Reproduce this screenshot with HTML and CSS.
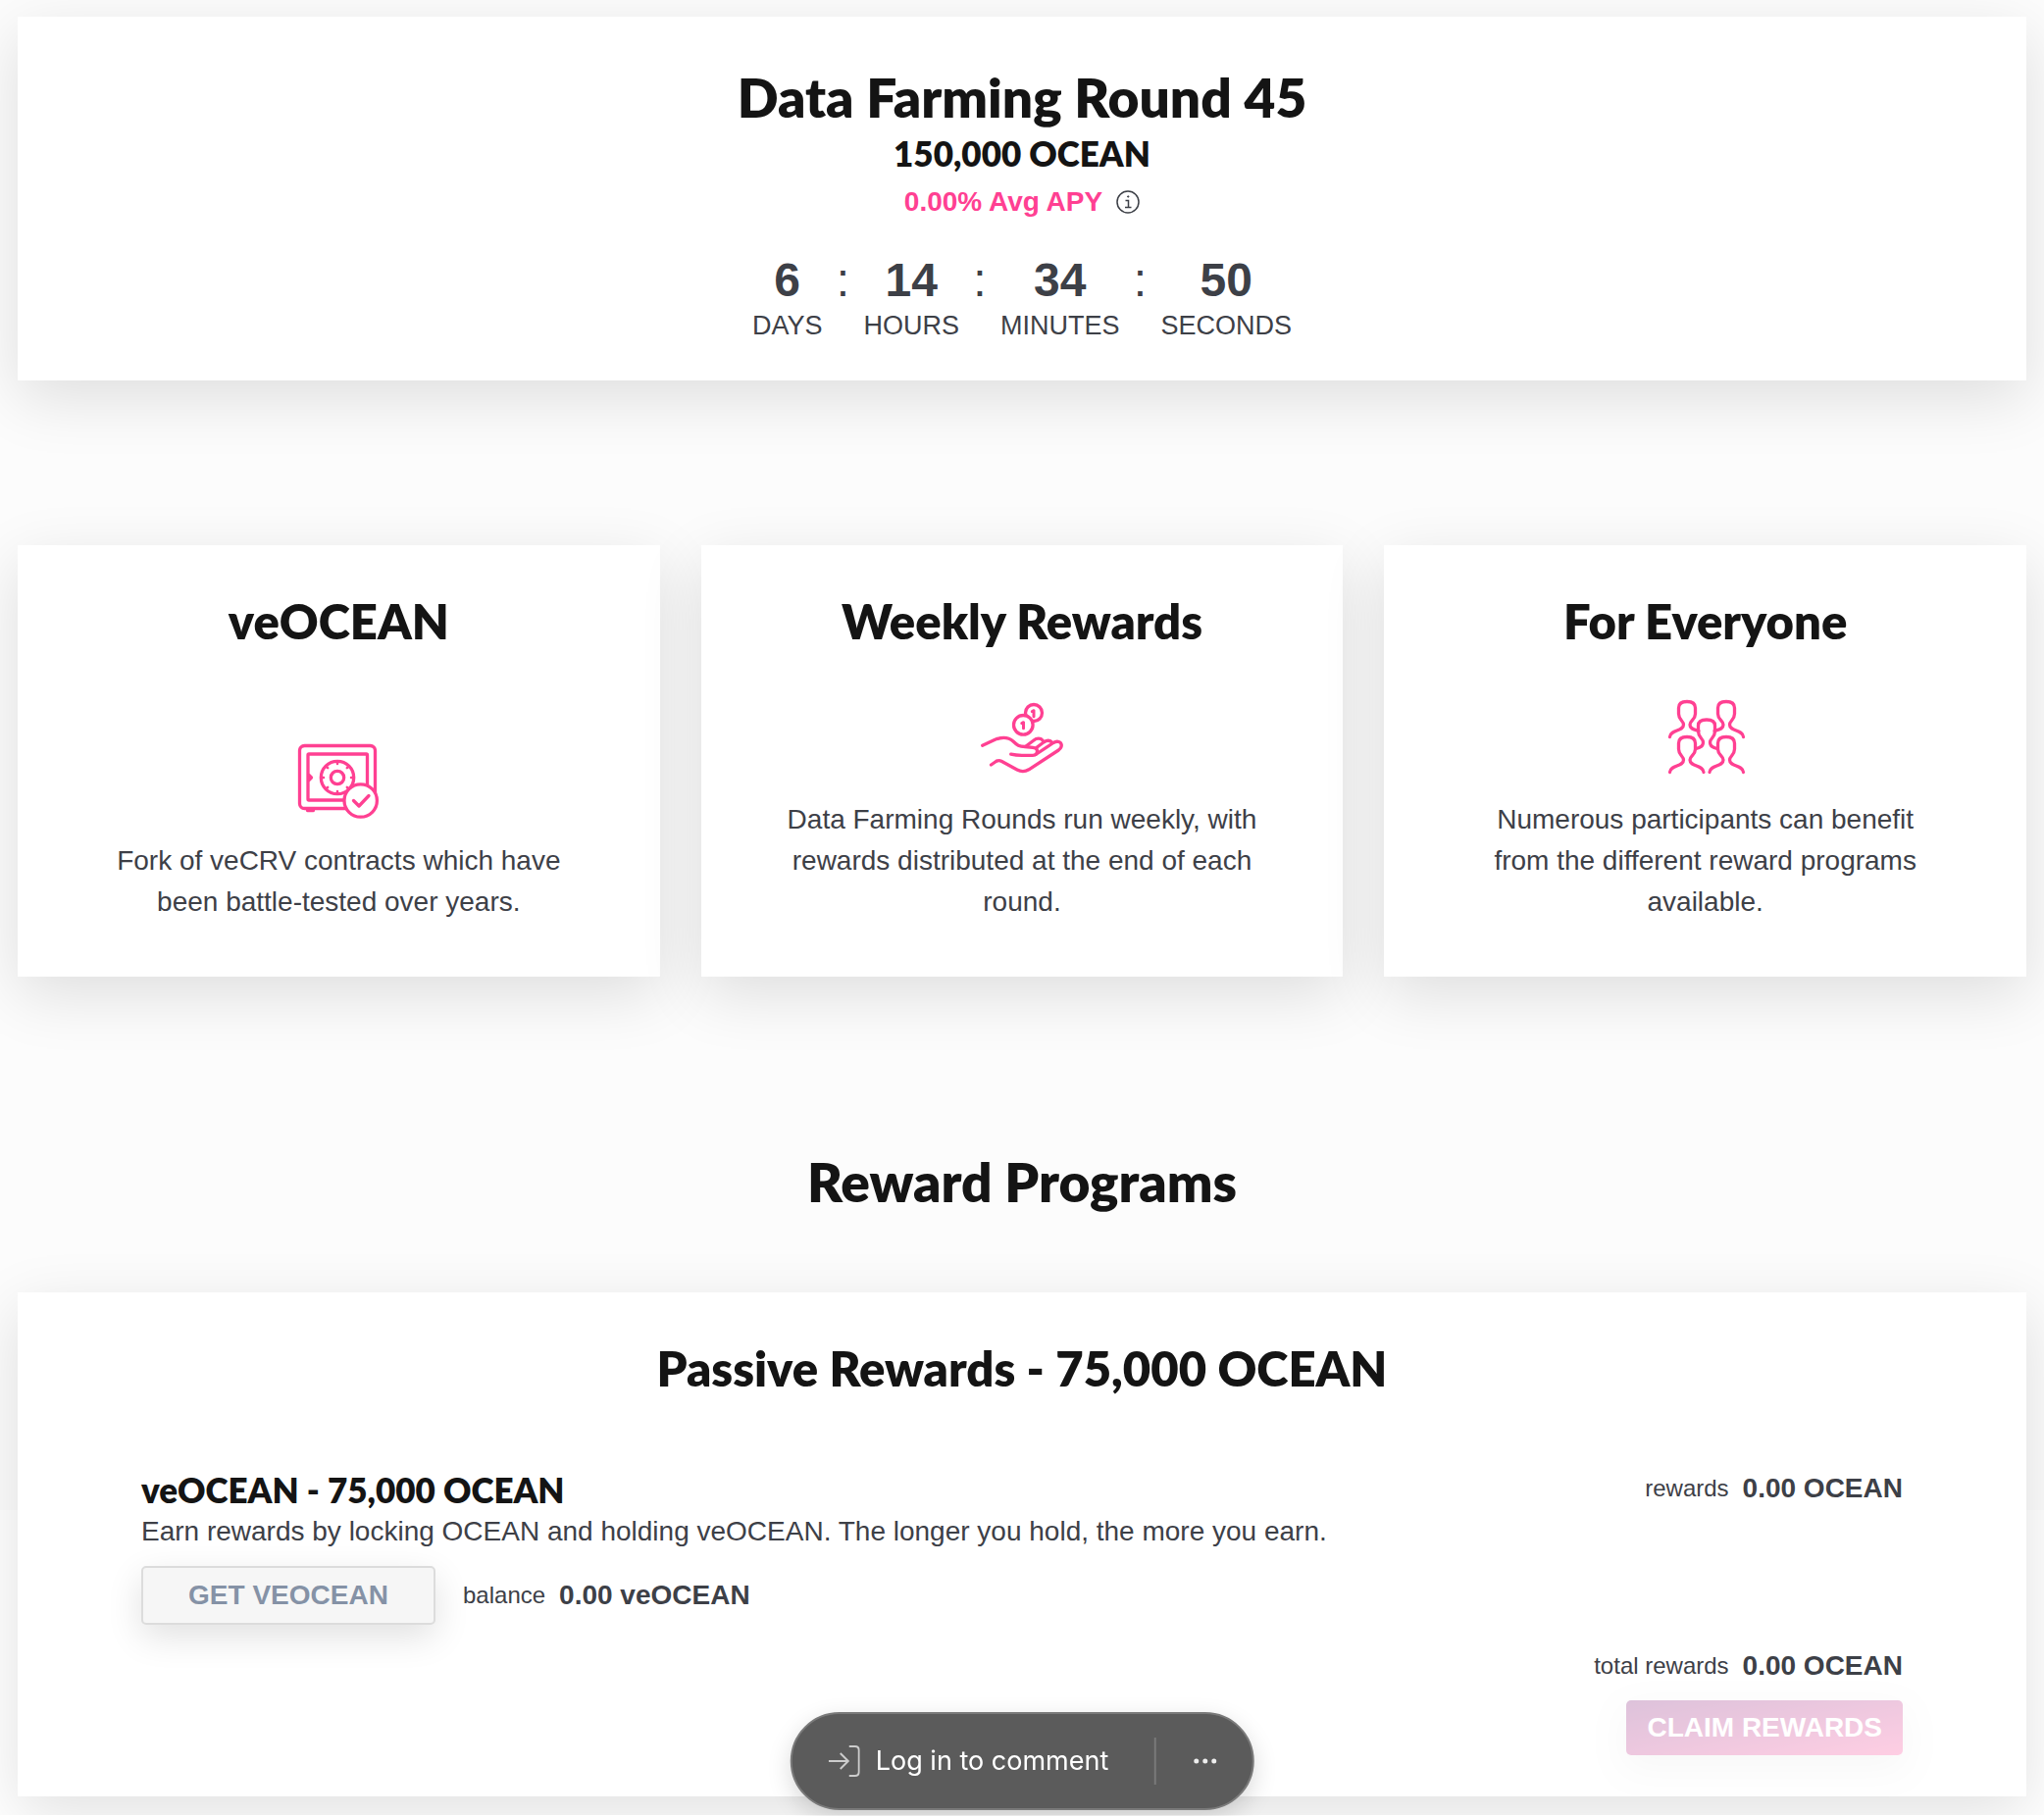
FILE: index.html
```html
<!DOCTYPE html>
<html lang="en">
<head>
<meta charset="utf-8">
<title>Data Farming</title>
<link rel="stylesheet" href="styles.css">
</head>
<body>
<main class="page">
  <section class="card hero">
    <h1 class="title">Data Farming Round 45</h1>
    <p class="subtitle">150,000 OCEAN</p>
    <div class="apy">
      <strong class="apy-value">0.00% Avg APY</strong>
      <svg class="info" viewBox="0 0 24 24" fill="none" stroke="currentColor" stroke-width="1.5" role="img" aria-label="Info"><circle cx="12" cy="12" r="11"/><path d="M9.500 10.500h3V17.500M9 17.500h6.500"/><circle cx="12.200" cy="6.500" r=".7" fill="currentColor" stroke-width="1"/></svg>
    </div>
    <div class="countdown">
      <div class="unit"><b class="num">6</b><span>DAYS</span></div>
      <span class="colon">:</span>
      <div class="unit"><b class="num">14</b><span>HOURS</span></div>
      <span class="colon">:</span>
      <div class="unit"><b class="num">34</b><span>MINUTES</span></div>
      <span class="colon">:</span>
      <div class="unit"><b class="num">50</b><span>SECONDS</span></div>
    </div>
  </section>

  <section class="features">
    <article class="card feature">
      <h2 class="heading">veOCEAN</h2>
      <div class="feature-body">
        <svg class="icon" viewBox="0 0 84 84" aria-hidden="true">
          <rect x="2.500" y="8.500" width="77" height="64" rx="5"/>
          <rect x="11" y="17" width="60.500" height="47" rx="1"/>
          <circle cx="41" cy="41" r="16.700"/>
          <path d="M41 26v1M41 55V56M26 41h1M55 41H56M30.500 30.500l.7.700M50.800 50.800l.7.700M30.500 51.500l.7-.7M50.800 31.200l.7-.7" stroke-width="2.500"/>
          <circle cx="41" cy="41" r="6.700"/>
          <path d="M12 38.500l2.500 2.500-2.500 2.500zM10.500 74.500h6"/>
          <circle class="fill" cx="64.700" cy="64.500" r="16.700"/>
          <path d="M57.500 64.500l5.500 5.500L73 59.500"/>
        </svg>
        <p>Fork of veCRV contracts which have been battle-tested over years.</p>
      </div>
    </article>
    <article class="card feature">
      <h2 class="heading">Weekly Rewards</h2>
      <div class="feature-body">
        <svg class="icon" viewBox="0 0 84 84" aria-hidden="true">
          <circle cx="54" cy="17" r="8.500"/>
          <path d="M52.300 15.500l1.700-.8v6" stroke-width="3"/>
          <circle class="fill" cx="43.300" cy="29.300" r="9.800"/>
          <path d="M41.800 27.500l1.700-.8v6" stroke-width="3"/>
          <path d="M1.700 50.300L14 44.500C21 41.500 28 41.500 33 46c4 4 6 5.200 12 5.500l8 .8c3 .3 4.500 1.500 4.500 3.500 0 3-2 4.500-4.500 4.500H42c-4 0-7-.2-11.300-1.200"/>
          <path d="M56 59.500L74 47.500c4-2.500 8-1 8.300 2.500 0 2-1 3.500-3 5L49 74.800c-4 2.300-8 2.300-12 .2L21 66.200c-2-1-3.500-1-5.500.3L10.500 70"/>
          <path d="M46 51l8-6c3-2.500 7-2.500 9 0M56 53l8-6c4-2.500 7-2 9 .5"/>
        </svg>
        <p>Data Farming Rounds run weekly, with rewards distributed at the end of each round.</p>
      </div>
    </article>
    <article class="card feature">
      <h2 class="heading">For Everyone</h2>
      <div class="feature-body">
        <svg class="icon" viewBox="0 0 84 84" aria-hidden="true">
          <path d="M5.500 41.500C6 34 19.500 36 19.500 29C19.500 25 14.500 24 14.500 18V12Q14.500 5.500 23 5.500T31.500 12V18C31.500 24 26 25 26 29C26 34 31 34 35 35.500"/>
          <path d="M80.500 41.500C80 34 66.500 36 66.500 29C66.500 25 71.500 24 71.500 18V12Q71.500 5.500 63 5.500T54.500 12V18C54.500 24 60 25 60 29C60 34 55 34 51 35.500"/>
          <path d="M32.500 53.500C37 52.500 39.500 51 39.500 47C39.500 43 34.500 42 34.500 36V30Q34.500 24 43 24T51.500 30V36C51.500 42 46.500 43 46.500 47C46.500 51 49 52.500 53.500 53.500"/>
          <path d="M5.500 77.500C6 70 19.500 72 19.500 65C19.500 61 14.500 60 14.500 54V48Q14.500 41.500 23 41.500T31.500 48V54C31.500 60 26 61 26 65C26 72 39.500 70 40 77.500"/>
          <path d="M46 77.500C46.500 70 60 72 60 65C60 61 54.500 60 54.500 54V48Q54.500 41.500 63 41.500T71.500 48V54C71.500 60 66.500 61 66.500 65C66.500 72 80 70 80.500 77.500"/>
        </svg>
        <p>Numerous participants can benefit from the different reward programs available.</p>
      </div>
    </article>
  </section>

  <h1 class="title programs">Reward Programs</h1>

  <section class="card passive">
    <h2 class="heading">Passive Rewards - 75,000 OCEAN</h2>
    <div class="program">
      <div>
        <h3 class="subtitle">veOCEAN - 75,000 OCEAN</h3>
        <p>Earn rewards by locking OCEAN and holding veOCEAN. The longer you hold, the more you earn.</p>
        <div class="actions">
          <button class="btn btn-plain" type="button">GET VEOCEAN</button>
          <span class="stat"><small>balance</small><b>0.00 veOCEAN</b></span>
        </div>
      </div>
      <span class="stat"><small>rewards</small><b>0.00 OCEAN</b></span>
    </div>
    <div class="totals">
      <span class="stat"><small>total rewards</small><b>0.00 OCEAN</b></span>
      <button class="btn btn-claim" type="button" disabled>CLAIM REWARDS</button>
    </div>
  </section>
</main>

<div class="toolbar">
  <button class="login" type="button">
    <svg class="login-icon" viewBox="0 0 32 32" fill="none" stroke="currentColor" stroke-width="2" aria-hidden="true"><path d="M0 16h20M12 8l8 8-8 8M21 1h6q4 0 4 4v22q0 4-4 4h-6"/></svg>
    Log in to comment
  </button>
  <button class="more" type="button" aria-label="More">
    <svg class="dots" viewBox="0 0 24 6" fill="currentColor" aria-hidden="true"><circle cx="3" cy="3" r="2.500"/><circle cx="12" cy="3" r="2.500"/><circle cx="21" cy="3" r="2.500"/></svg>
  </button>
</div>
</body>
</html>
```
FILE: styles.css
```css
* { box-sizing: border-box; }

body {
  margin: 0;
  color: #3d4047;
  font: 28px/42px "Liberation Sans", Arial, sans-serif;
}

h1, h2, h3, p { margin: 0; }

.page {
  padding: 17px 18px 19px;
  background: linear-gradient(#fcfcfc 1540px, #fff 0);
}

.card {
  background: #fff;
  box-shadow: 0 18px 60px rgba(0, 0, 0, .12);
}

.title, .heading, .subtitle {
  color: #141414;
  font-family: Lato, sans-serif;
  font-weight: 800;
  text-align: center;
}
.title { font-size: 55px; line-height: 70px; }
.heading { font-size: 49px; line-height: 60px; }
.subtitle { font-size: 35px; line-height: 44px; }

.hero {
  display: flex;
  flex-direction: column;
  align-items: center;
  padding: 47px 42px 35px;
}
.apy {
  display: flex;
  align-items: center;
  gap: 14px;
  margin-top: 7px;
}
.apy-value { color: #ff4092; }
.info { width: 24px; height: 24px; }

.countdown {
  display: flex;
  margin-top: 34px;
  font-size: 27px;
}
.unit {
  display: flex;
  flex-direction: column;
  align-items: center;
}
.num, .colon { font-size: 48px; line-height: 50px; }
.colon { width: 42px; text-align: center; }

.features {
  display: grid;
  grid-template-columns: repeat(3, 1fr);
  gap: 42px;
  margin-top: 168px;
}
.feature {
  display: flex;
  flex-direction: column;
  justify-content: space-between;
  min-height: 440px;
  padding: 47px 84px 55px;
  text-align: center;
}
.feature-body {
  display: flex;
  flex-direction: column;
  align-items: center;
  gap: 21px;
}
.icon {
  width: 84px;
  height: 84px;
  fill: none;
  stroke: #ff4092;
  stroke-width: 3.3;
  stroke-linecap: round;
  stroke-linejoin: round;
}
.icon .fill { fill: #fff; }

.programs { margin: 174px 0 78px; }

.passive { padding: 47px 126px 42px; }
.program {
  display: flex;
  justify-content: space-between;
  align-items: flex-start;
  margin-top: 72px;
}
.program .subtitle { text-align: left; }

.actions {
  display: flex;
  align-items: center;
  gap: 28px;
  margin-top: 14px;
}
.stat {
  display: flex;
  align-items: center;
  gap: 14px;
}
.stat small { font-size: 24px; }

.btn {
  border: 0;
  border-radius: 5px;
  font: bold 28px/42px "Liberation Sans", Arial, sans-serif;
  box-shadow: 0 12px 36px rgba(0, 0, 0, .12);
}
.btn-plain {
  width: 300px;
  padding: 7px 20px;
  border: 2px solid #dcdcdc;
  background: #f6f6f6;
  color: #8592a6;
}
.btn-claim {
  padding: 7px 21px;
  background: linear-gradient(to bottom right, #7b1173, #ff4092);
  color: #fff;
  opacity: .25;
}
.totals {
  display: flex;
  flex-direction: column;
  align-items: flex-end;
  gap: 14px;
  margin-top: 21px;
}

.toolbar {
  position: fixed;
  bottom: 6px;
  left: 50%;
  transform: translateX(-50%);
  display: flex;
  align-items: center;
  height: 100px;
  border: 2px solid #7a7a7a;
  border-radius: 50px;
  background: #5b5b5b;
  box-shadow: 0 8px 24px rgba(0, 0, 0, .15);
}
.toolbar button {
  display: flex;
  align-items: center;
  border: 0;
  background: none;
  color: #fff;
  font: 27px/48px Inter, sans-serif;
}
.toolbar .login {
  gap: 16px;
  padding: 0 46px 0 37px;
  border-right: 2px solid #7a7a7a;
}
.toolbar .more { padding: 0 36px 0 38px; }
.login-icon { width: 32px; height: 32px; color: #ccc; }
.dots { width: 24px; height: 6px; color: #eee; }
```
